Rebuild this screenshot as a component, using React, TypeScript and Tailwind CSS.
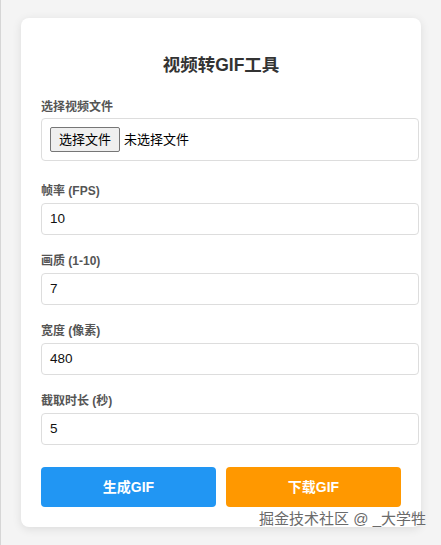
import React from 'react';

const font = { fontFamily: '"Liberation Sans", "Noto Sans CJK SC", sans-serif' };

const fields = [
  { label: '帧率 (FPS)', value: '10' },
  { label: '画质 (1-10)', value: '7' },
  { label: '宽度 (像素)', value: '480' },
  { label: '截取时长 (秒)', value: '5' },
];

export default function App() {
  return (
    <div
      style={font}
      className="relative min-h-screen bg-[#f4f4f4] border-l border-[#d6d6d6] pt-[18px] pb-[19px] px-[20px]"
    >
      {/* Card */}
      <div className="bg-white rounded-[8px] shadow-[0_2px_10px_rgba(0,0,0,0.1)] px-[20px] pt-[35px] pb-[20px]">
        <h2 className="text-center text-[17.5px] leading-[24px] font-bold text-[#333]">视频转GIF工具</h2>

        {/* File */}
        <div className="mt-[23px] mb-[23px]">
          <label className="block text-[12px] leading-[15px] font-bold text-[#555] mb-[3px]">选择视频文件</label>
          <div className="box-content w-full p-2 border border-[#ddd] rounded-[4px] flex items-center h-[25px]">
            <span className="h-[25px] px-[8px] flex items-center bg-[#efefef] border border-[#767676] rounded-[2px] text-[13px] text-black">
              选择文件
            </span>
            <span className="ml-[4px] text-[13px] text-black">未选择文件</span>
          </div>
        </div>

        {fields.map((f) => (
          <div key={f.label} className="mb-[19px]">
            <label className="block text-[12px] leading-[15px] font-bold text-[#555] mb-[4px]">{f.label}</label>
            <div className="box-content w-full h-[14px] px-2 py-2 border border-[#ddd] rounded-[4px] flex items-center text-[13.5px] text-[#111]">
              {f.value}
            </div>
          </div>
        ))}

        {/* Actions */}
        <div className="flex gap-[10px] pt-[3px]">
          <button className="flex-1 h-[40px] rounded-[4px] bg-[#2196f3] text-white text-[14px] font-bold">生成GIF</button>
          <button className="flex-1 h-[40px] rounded-[4px] bg-[#ff9800] text-white text-[14px] font-bold">下载GIF</button>
        </div>
      </div>

      {/* Watermark */}
      <div className="absolute right-[15px] top-[508px] text-[15px] leading-[22px] text-[#6a6a6a] [text-shadow:0_0_2px_rgba(255,255,255,0.9)]">
        掘金技术社区 @ _大学牲
      </div>
    </div>
  );
}
